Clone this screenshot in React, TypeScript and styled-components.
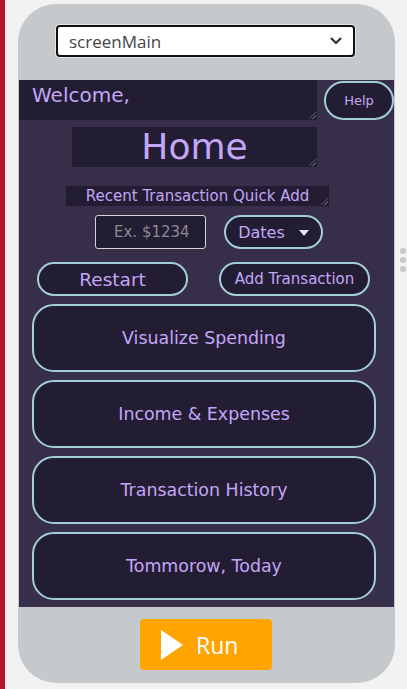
import * as React from "react";
import styled, { createGlobalStyle } from "styled-components";

const GlobalStyle = createGlobalStyle`
  html, body {
    margin: 0;
    padding: 0;
    background: #f2f2f2;
    overflow: hidden;
  }
`;

const purple = "#c4a6f6";
const dark = "#231d33";
const rim = "#a3cdd8";

const Page = styled.div`
  display: flex;
  height: 689px;
  width: 407px;
  position: relative;
`;

const RedBar = styled.div`
  width: 5px;
  background: #b0152a;
`;

const Frame = styled.div`
  margin: 4px 0 0 13px;
  width: 377px;
  height: 679px;
  border-radius: 38px;
  background: #c6c9cb;
  display: flex;
  flex-direction: column;
  overflow: hidden;
`;

const SelectWrap = styled.div`
  margin: 21px 0 0 38px;
  width: 299px;
  height: 32px;
  box-sizing: border-box;
  border: 2px solid #111;
  border-radius: 4px;
  background: #fff;
  display: flex;
  align-items: center;
  justify-content: space-between;
  padding: 0 10px 0 11px;
  font-family: "Open Sans", "Liberation Sans", sans-serif;
  font-size: 17px;
  color: #444;
  box-shadow: 0 0 0 1px #e6e6e6;
`;

const Screen = styled.div`
  margin: 23px 0 0 1px;
  width: 375px;
  height: 527px;
  background: #372e4a;
  display: flex;
  flex-direction: column;
  font-family: "DejaVu Sans", Verdana, sans-serif;
  color: ${purple};
`;

const Row = styled.div<{ $top: number; $left: number; $gap?: number }>`
  display: flex;
  margin-top: ${(p) => p.$top}px;
  padding-left: ${(p) => p.$left}px;
  gap: ${(p) => p.$gap ?? 0}px;
  align-items: flex-start;
`;

const Area = styled.div<{ $w: number; $h: number; $size: number; $align?: string }>`
  position: relative;
  width: ${(p) => p.$w}px;
  height: ${(p) => p.$h}px;
  background: ${dark};
  font-size: ${(p) => p.$size}px;
  text-align: ${(p) => p.$align ?? "center"};
  line-height: ${(p) => p.$h}px;
  box-sizing: border-box;
  white-space: nowrap;
  overflow: hidden;

  &:after {
    content: "";
    position: absolute;
    right: 1px;
    bottom: 1px;
    width: 7px;
    height: 7px;
    background: linear-gradient(
      135deg,
      transparent 45%,
      #5a5468 45%, #5a5468 55%,
      transparent 55%, transparent 70%,
      #5a5468 70%, #5a5468 80%,
      transparent 80%
    );
  }
`;

const WelcomeArea = styled(Area)`
  line-height: normal;
  padding: 3px 0 0 13px;
`;

const Pill = styled.div<{ $w: number; $h: number; $size: number; $radius: number }>`
  width: ${(p) => p.$w}px;
  height: ${(p) => p.$h}px;
  box-sizing: border-box;
  border: 2px solid ${rim};
  border-radius: ${(p) => p.$radius}px;
  background: ${dark};
  font-size: ${(p) => p.$size}px;
  display: flex;
  align-items: center;
  justify-content: center;
  gap: 14px;
  color: ${purple};
  white-space: nowrap;
`;

const HelpPill = styled(Pill)`
  margin-top: 1px;
`;

const AmountInput = styled.div`
  width: 111px;
  height: 34px;
  box-sizing: border-box;
  border: 1px solid #d4d4d8;
  border-radius: 3px;
  background: ${dark};
  color: #8c8a92;
  font-size: 15px;
  display: flex;
  align-items: center;
  padding-left: 18px;
  overflow: hidden;
  white-space: nowrap;
`;

const Caret = styled.span`
  width: 0;
  height: 0;
  border-left: 5px solid transparent;
  border-right: 5px solid transparent;
  border-top: 6px solid #e8dcff;
  margin-top: 2px;
`;

const BigList = styled.div`
  display: flex;
  flex-direction: column;
  gap: 8px;
  margin: 8px 0 0 13px;
`;

const RunArea = styled.div`
  display: flex;
  padding: 12px 0 0 122px;
`;

const RunButton = styled.div`
  width: 132px;
  height: 51px;
  border-radius: 4px;
  background: #ffa400;
  display: flex;
  align-items: center;
  gap: 12px;
  padding-left: 20px;
  box-sizing: border-box;
  color: #fff;
  font-family: "Open Sans", "Liberation Sans", sans-serif;
  font-size: 23px;
`;

const Dots = styled.div`
  position: absolute;
  left: 400px;
  top: 248px;
  display: flex;
  flex-direction: column;
  gap: 3px;

  span {
    width: 6px;
    height: 6px;
    border-radius: 50%;
    background: #c9c9c9;
  }
`;

const bigButtons = [
  "Visualize Spending",
  "Income & Expenses",
  "Transaction History",
  "Tommorow, Today",
];

export default function App() {
  return (
    <>
      <GlobalStyle />
      <Page>
        <RedBar />
        <Frame>
          <SelectWrap>
            <span>screenMain</span>
            <svg width="14" height="10" viewBox="0 0 14 10">
              <path d="M2 2 L7 7 L12 2" fill="none" stroke="#333" strokeWidth="2.2" />
            </svg>
          </SelectWrap>
          <Screen>
            <Row $top={0} $left={0} $gap={7}>
              <WelcomeArea $w={298} $h={40} $size={20} $align="left">
                Welcome,
              </WelcomeArea>
              <HelpPill $w={70} $h={39} $size={13} $radius={20}>
                Help
              </HelpPill>
            </Row>
            <Row $top={7} $left={53}>
              <Area $w={245} $h={40} $size={36}>
                Home
              </Area>
            </Row>
            <Row $top={19} $left={47}>
              <Area $w={263} $h={20} $size={15}>
                Recent Transaction Quick Add
              </Area>
            </Row>
            <Row $top={9} $left={76} $gap={18}>
              <AmountInput>Ex. $1234</AmountInput>
              <Pill $w={99} $h={34} $size={16} $radius={17}>
                <span>Dates</span>
                <Caret />
              </Pill>
            </Row>
            <Row $top={13} $left={18} $gap={31}>
              <Pill $w={151} $h={34} $size={18.5} $radius={17}>
                Restart
              </Pill>
              <Pill $w={151} $h={34} $size={15} $radius={17}>
                Add Transaction
              </Pill>
            </Row>
            <BigList>
              {bigButtons.map((label) => (
                <Pill key={label} $w={344} $h={68} $size={17.4} $radius={22}>
                  {label}
                </Pill>
              ))}
            </BigList>
          </Screen>
          <RunArea>
            <RunButton>
              <svg width="24" height="32" viewBox="0 0 24 32">
                <path d="M1 1 L23 16 L1 31 Z" fill="#fff" />
              </svg>
              <span>Run</span>
            </RunButton>
          </RunArea>
        </Frame>
        <Dots>
          <span />
          <span />
          <span />
        </Dots>
      </Page>
    </>
  );
}
